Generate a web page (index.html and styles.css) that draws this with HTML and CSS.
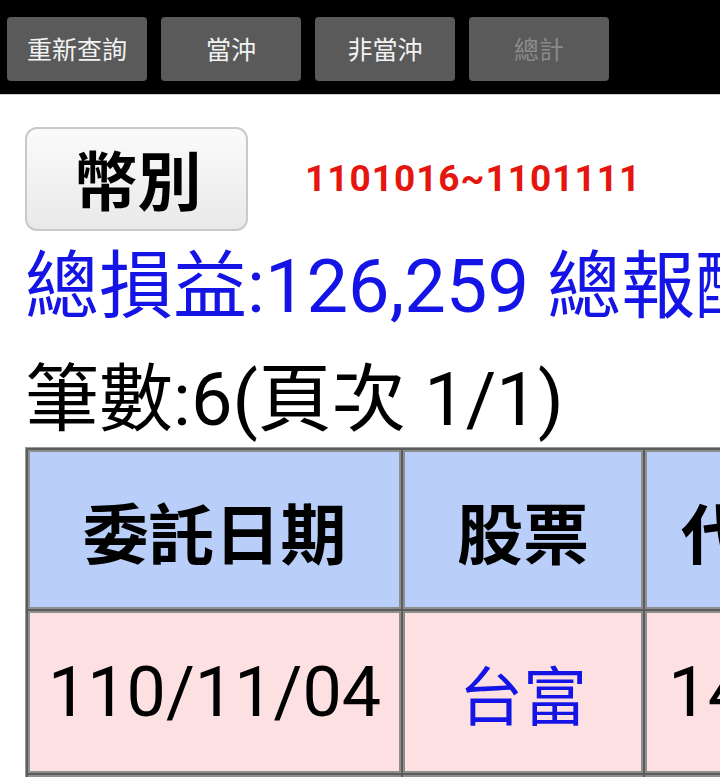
FILE: index.html
```html
<!DOCTYPE html>
<html lang="zh-Hant">
<head>
<meta charset="utf-8">
<title>損益查詢</title>
<link rel="stylesheet" href="styles.css">
</head>
<body>
<div class="topbar">
  <button class="tab">重新查詢</button>
  <button class="tab">當沖</button>
  <button class="tab">非當沖</button>
  <button class="tab tab-disabled">總計</button>
</div>
<div class="main">
  <div class="filter-row">
    <button class="currency-btn">幣別</button>
    <span class="date-range">1101016~1101111</span>
  </div>
  <div class="total-line">總損益:126,259 總報酬率</div>
  <div class="count-line">筆數:6(頁次 1/1)</div>
  <table class="grid">
    <tr class="head">
      <td class="c1">委託日期</td>
      <td class="c2">股票</td>
      <td class="c3">代號</td>
    </tr>
    <tr class="row">
      <td class="c1 num">110/11/04</td>
      <td class="c2 stock">台富</td>
      <td class="c3 num">1432</td>
    </tr>
    <tr class="row">
      <td class="c1 num">110/11/05</td>
      <td class="c2 stock">台富</td>
      <td class="c3 num">1432</td>
    </tr>
  </table>
</div>
</body>
</html>
```
FILE: styles.css
```css
html, body {
  margin: 0;
  padding: 0;
  background: #fff;
  overflow: hidden;
}
body {
  font-family: Roboto, "Noto Sans CJK TC", sans-serif;
  color: #000;
}
.topbar {
  height: 77px;
  background: #000;
  border-bottom: 1px solid #cfcfcf;
  display: flex;
  align-items: flex-start;
  gap: 14px;
  padding: 17px 7px 0;
}
.tab {
  width: 140px;
  height: 64px;
  border: none;
  border-radius: 4px;
  background: #5a5a5a;
  color: #f2f2f2;
  font-family: "Noto Sans CJK TC", sans-serif;
  font-size: 25px;
  padding: 0 0 2px;
  margin: 0;
}
.tab-disabled {
  color: #8a8a8a;
}
.main {
  padding-left: 25px;
}
.filter-row {
  margin-top: 32px;
  display: flex;
  align-items: center;
  height: 104px;
}
.currency-btn {
  width: 223px;
  height: 104px;
  box-sizing: border-box;
  border: 2px solid #c9c9c9;
  border-radius: 12px;
  background: linear-gradient(#fbfbfb, #e9e9e9);
  font-family: "Noto Sans CJK TC", sans-serif;
  font-weight: 700;
  font-size: 64px;
  color: #000;
  padding: 0 0 4px 2px;
  margin: 0;
  line-height: 1;
}
.date-range {
  margin-left: 57px;
  color: #e5160f;
  font-weight: 700;
  font-size: 37px;
  letter-spacing: 1px;
  padding-bottom: 1px;
}
.total-line {
  color: #1414e6;
  font-size: 74px;
  line-height: 112px;
  white-space: nowrap;
}
.count-line {
  margin-top: 9px;
  font-size: 74px;
  line-height: 95px;
  white-space: nowrap;
}
.grid {
  border: 1px solid #9a9a9a;
  border-spacing: 2px;
  background: #5c5c5c;
  table-layout: fixed;
  width: 827px;
}
.grid td {
  border: 2px solid #8e8e8e;
  padding: 0;
  text-align: center;
  vertical-align: middle;
  white-space: nowrap;
  overflow: hidden;
}
.c1 { width: 369px; }
.c2 { width: 236px; }
.c3 { width: 200px; }
.head td {
  background: #b9cffa;
  height: 155px;
  font-family: "Noto Sans CJK TC", sans-serif;
  font-weight: 700;
  font-size: 66px;
}
.row td {
  background: #fde1e2;
  height: 158px;
}
.num {
  font-size: 70px;
  padding-bottom: 10px;
}
.stock {
  color: #1414e6;
  font-family: "Noto Sans CJK TC", sans-serif;
  font-size: 64px;
}
```
